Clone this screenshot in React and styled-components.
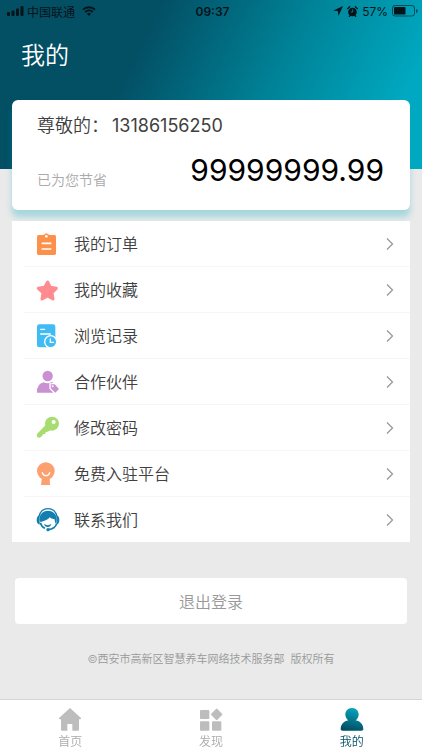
import React from 'react'
import styled, { createGlobalStyle } from 'styled-components';

const menuItems = [
    { title: '我的订单', Icon: OrderIcon },
    { title: '我的收藏', Icon: StarIcon },
    { title: '浏览记录', Icon: HistoryIcon },
    { title: '合作伙伴', Icon: PartnerIcon },
    { title: '修改密码', Icon: KeyIcon },
    { title: '免费入驻平台', Icon: JoinIcon },
    { title: '联系我们', Icon: ServiceIcon },
];

const tabs = [
    { title: '首页', Icon: HomeIcon },
    { title: '发现', Icon: DiscoverIcon },
    { title: '我的', Icon: ProfileIcon, active: true },
];

function App() {
    return (
        <PageStyled>
            <GlobalStyle />
            <HeaderStyled>
                <StatusBar />
                <h1>我的</h1>
            </HeaderStyled>
            <MainStyled>
                <SavingsCard>
                    <p className="greeting">尊敬的：<span>13186156250</span></p>
                    <div className="savings">
                        <span className="label">已为您节省</span>
                        <strong>99999999.99</strong>
                    </div>
                </SavingsCard>
                <MenuList>
                    {menuItems.map(({ title, Icon }) => (
                        <li key={title}>
                            <MenuLink href="#">
                                <Icon />
                                <span>{title}</span>
                                <ChevronIcon />
                            </MenuLink>
                        </li>
                    ))}
                </MenuList>
                <LogoutButton type="button">退出登录</LogoutButton>
                <Copyright>©西安市高新区智慧养车网络技术服务部&nbsp; 版权所有</Copyright>
            </MainStyled>
            <TabBar>
                {tabs.map(({ title, Icon, active }) => (
                    <TabLink href="#" key={title} $active={active}>
                        <Icon />
                        {title}
                    </TabLink>
                ))}
            </TabBar>
        </PageStyled>
    )
}

function StatusBar() {
    return (
        <StatusBarStyled>
            <div className="side">
                <svg width="17" height="10" viewBox="0 0 17 10" fill="currentColor">
                    <rect x="0" y="6" width="3" height="4" rx="1" />
                    <rect x="4.5" y="4.5" width="3" height="5.5" rx="1" />
                    <rect x="9" y="2.5" width="3" height="7.5" rx="1" />
                    <rect x="13.5" y="0" width="3" height="10" rx="1" />
                </svg>
                <span className="carrier">中国联通</span>
                <svg width="14" height="10" viewBox="0 0 14 10">
                    <path d="M1 3.7a8.6 8.6 0 0 1 12 0M3.2 6a5.4 5.4 0 0 1 7.6 0" fill="none" stroke="currentColor" strokeWidth="1.8" />
                    <path d="M4.9 7.8a3 3 0 0 1 4.2 0L7 10z" fill="currentColor" />
                </svg>
            </div>
            <time>09:37</time>
            <div className="side end">
                <svg width="10" height="10" viewBox="0 0 10 10" fill="currentColor">
                    <path d="M10 0L5.4 10 4.9 5.1 0 4.7z" />
                </svg>
                <svg width="11" height="11" viewBox="0 0 33 33">
                    <circle cx="16.5" cy="18" r="13" fill="currentColor" />
                    <path d="M2 8l6-6M31 8l-6-6M7 31l3-4M26 31l-3-4" stroke="currentColor" strokeWidth="4" strokeLinecap="round" />
                    <path d="M17 10v8h-6" fill="none" stroke="#008a9e" strokeWidth="2.5" />
                </svg>
                <span>57%</span>
                <svg width="26" height="12" viewBox="0 0 26 12">
                    <rect x="0.5" y="0.5" width="22" height="10.5" rx="2.5" fill="none" stroke="currentColor" strokeOpacity="0.6" />
                    <rect x="2" y="2" width="11.5" height="7.5" rx="0.8" fill="currentColor" />
                    <path d="M24 4v4q1.8-.5 1.8-2T24 4z" fill="currentColor" fillOpacity="0.6" />
                </svg>
            </div>
        </StatusBarStyled>
    )
}

function OrderIcon() {
    return (
        <svg width="24" height="24" viewBox="0 0 72 72">
            <path d="M8 9h48q4 0 4 5v50q0 5-5 5H8q-5 0-5-5V14q0-5 5-5z" fill="#fd914c" />
            <path d="M22 12V8q4 0 5-2 4-4 8 0 1 2 5 2v4z" fill="#fd914c" />
            <circle cx="31" cy="13" r="4" fill="#fff" />
            <path d="M17 34h29M17 51h29" stroke="#fff" strokeWidth="5" />
        </svg>
    )
}

function StarIcon() {
    return (
        <svg width="24" height="24" viewBox="0 0 72 72">
            <path d="M35 12l8 16 18 3-13 13 3 19-16-9-17 9 3-19L7 31l19-3z" fill="#fd8b90" stroke="#fd8b90" strokeWidth="9" strokeLinejoin="round" />
        </svg>
    )
}

function HistoryIcon() {
    return (
        <svg width="24" height="24" viewBox="0 0 72 72">
            <rect x="3" y="1" width="55" height="69" rx="7" fill="#40bbf4" />
            <path d="M14 16h12M14 30h29" stroke="#fff" strokeWidth="4" strokeLinecap="round" />
            <circle cx="44" cy="53" r="18" fill="#40bbf4" stroke="#fff" strokeWidth="4" />
            <path d="M43 45v10h10" fill="none" stroke="#fff" strokeWidth="4" strokeLinecap="round" />
        </svg>
    )
}

function PartnerIcon() {
    return (
        <svg width="24" height="24" viewBox="0 0 72 72" fill="#ca90d1">
            <circle cx="35" cy="18" r="15.5" />
            <path d="M3 68q-1-27 20-31 12 6 24-1 4 1 6 3l-13 1v16l12 12z" />
            <path d="M44 43h12l13 14-11 11-14-13z" />
            <circle cx="50" cy="49" r="3" fill="#fff" />
        </svg>
    )
}

function KeyIcon() {
    return (
        <svg width="24" height="24" viewBox="0 0 72 72">
            <path d="M29 27L3 54q-2 5 1 9 5 4 10 1l6-6 1-4h7l1-6 6-1 11-6z" fill="#a7dc70" />
            <circle cx="48" cy="23" r="21" fill="#a7dc70" />
            <circle cx="53" cy="18" r="6" fill="#fff" />
        </svg>
    )
}

function JoinIcon() {
    return (
        <svg width="24" height="24" viewBox="0 0 72 72">
            <circle cx="29.5" cy="27" r="26.5" fill="#fda070" />
            <path d="M18 44h23l1 25H15z" fill="#fda070" />
            <path d="M19 32q3 9 11 9t11-9" fill="none" stroke="#fff" strokeWidth="4" strokeLinecap="round" />
        </svg>
    )
}

function ServiceIcon() {
    return (
        <svg width="24" height="24" viewBox="0 0 72 72">
            <path d="M9 25C13 9 23 2 36 2s23 7 27 23" fill="none" stroke="#147fae" strokeWidth="4" />
            <path d="M13 42C6 20 20 8 36 8s30 12 24 34l-3 6q1-8-2-15-8 1-14-5-6 9-24 13z" fill="#147fae" />
            <path d="M11 22v28q-9-2-9-14t9-14zM61 22v28q9-2 9-14t-9-14z" fill="#147fae" />
            <path d="M13 44q4 13 14 17M62 47q-5 15-25 18" fill="none" stroke="#147fae" strokeWidth="5" />
            <path d="M24 48q11 7 22 0-2 9-11 9t-11-9z" fill="#147fae" />
            <circle cx="36" cy="65" r="5" fill="#147fae" />
        </svg>
    )
}

function ChevronIcon() {
    return (
        <svg width="8" height="14" viewBox="0 0 8 14" fill="none" stroke="#999" strokeWidth="1.3">
            <path d="M1 1.5l5.5 5.5L1 12.5" />
        </svg>
    )
}

function HomeIcon() {
    return (
        <svg width="24" height="24" viewBox="0 0 72 72">
            <path d="M36 3L3 33q-1 4 3 4h3v31q0 3 3 3h16V51h15v20h17q3 0 3-3V37h3q4 0 3-4z" fill="#bdbdbd" />
        </svg>
    )
}

function DiscoverIcon() {
    return (
        <svg width="24" height="24" viewBox="0 0 72 72" fill="#bdbdbd">
            <rect x="3" y="9" width="28" height="27" rx="3" />
            <rect x="3" y="43" width="28" height="28" rx="3" />
            <rect x="39" y="43" width="28" height="28" rx="3" />
            <rect x="40" y="9" width="26" height="26" rx="3" transform="rotate(45 53 22)" />
        </svg>
    )
}

function ProfileIcon() {
    return (
        <svg width="24" height="24" viewBox="0 0 72 72" fill="url(#profileFill)">
            <defs>
                <linearGradient id="profileFill" gradientUnits="userSpaceOnUse" x1="45" y1="4" x2="30" y2="72">
                    <stop offset="0" stopColor="#04a5bd" />
                    <stop offset="1" stopColor="#034c61" />
                </linearGradient>
            </defs>
            <path d="M36 3c12 0 20 9 20 19 0 8-4 14-9 18 14 3 23 12 23 26 0 4-2 5-6 5H8c-4 0-6-1-6-5 0-14 9-23 23-26-5-4-9-10-9-18C16 12 24 3 36 3z" />
        </svg>
    )
}

const GlobalStyle = createGlobalStyle`
    *{
        box-sizing: border-box;
        margin: 0;
        padding: 0;
    }
    body{
        background: #eaeaea;
        color: #404040;
        font-family: Inter, 'Noto Sans CJK SC', sans-serif;
        font-weight: 350;
    }
    a{
        text-decoration: none;
    }
    svg{
        display: block;
        flex-shrink: 0;
    }
`;

const PageStyled = styled.div`
    display: flex;
    flex-direction: column;
    min-height: 100vh;
`;

const HeaderStyled = styled.header`
    height: 169px;
    background: linear-gradient(116deg, #034f64 0%, #034f64 32%, #008297 62%, #00a9c1 90%);
    h1{
        padding: 16px 21px;
        color: #fff;
        font-size: 24px;
        font-weight: 350;
        line-height: 36px;
    }
`;

const StatusBarStyled = styled.div`
    display: grid;
    grid-template-columns: 1fr auto 1fr;
    align-items: center;
    height: 22px;
    padding: 0 4px 0 7px;
    color: #06141a;
    font-size: 12px;
    font-weight: 400;
    .side{
        display: flex;
        align-items: center;
        gap: 3px;
    }
    .end{
        justify-content: flex-end;
        gap: 4px;
    }
    .carrier{
        padding-right: 4px;
    }
    time{
        font-weight: 600;
    }
`;

const MainStyled = styled.main`
    display: flex;
    flex: 1;
    flex-direction: column;
    margin-top: -69px;
    padding: 0 12px;
`;

const SavingsCard = styled.section`
    height: 110px;
    padding: 13px 26px 0 25px;
    border-radius: 6px;
    background: #fff;
    box-shadow: 0 7px 6px rgba(0, 169, 193, .3);
    .greeting{
        font-size: 18px;
        line-height: 26px;
        span{
            padding-left: 3px;
            font-weight: 400;
        }
    }
    .savings{
        display: flex;
        align-items: center;
        justify-content: space-between;
        padding-top: 11px;
    }
    .label{
        padding-top: 20px;
        color: #aaa;
        font-size: 14px;
        line-height: 20px;
    }
    strong{
        color: #000;
        font-size: 30px;
        font-weight: 400;
        line-height: 40px;
    }
`;

const MenuList = styled.ul`
    margin-top: 11px;
    padding-left: 12px;
    background: #fff;
    list-style: none;
    li + li{
        border-top: 1px solid #f6f6f6;
    }
`;

const MenuLink = styled.a`
    display: flex;
    align-items: center;
    height: 45px;
    padding: 0 16px 0 12px;
    color: #404040;
    font-size: 16px;
    span{
        flex: 1;
        padding: 0 0 2px 14px;
    }
`;

const LogoutButton = styled.button`
    height: 46px;
    margin: 36px 3px 0;
    border: 0;
    border-radius: 4px;
    background: #fff;
    color: #999;
    font-family: inherit;
    font-size: 16px;
    font-weight: inherit;
`;

const Copyright = styled.p`
    margin: 26px 0;
    color: #999;
    font-size: 11px;
    line-height: 18px;
    text-align: center;
`;

const TabBar = styled.nav`
    position: sticky;
    bottom: 0;
    display: flex;
    height: 51px;
    border-top: 1px solid #d4d4d4;
    background: #fff;
`;

const TabLink = styled.a`
    display: flex;
    flex: 1;
    flex-direction: column;
    align-items: center;
    padding-top: 7px;
    color: ${props => props.$active ? '#034f64' : '#aaa'};
    font-size: 12px;
    line-height: 22px;
`;

export default App;
